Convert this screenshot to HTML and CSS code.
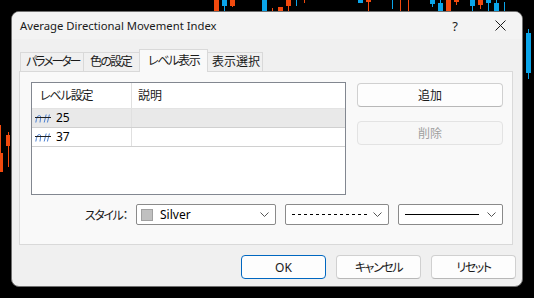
FILE: index.html
```html
<!DOCTYPE html>
<html lang="ja">
<head>
<meta charset="utf-8">
<title>Average Directional Movement Index</title>
<link rel="stylesheet" href="styles.css">
</head>
<body>
<svg class="chart" width="534" height="298" viewBox="0 0 534 298">
  <g class="up">
    <rect x="222" y="0" width="5" height="6"/><rect x="224" y="0" width="1" height="11"/>
    <rect x="262" y="0" width="5" height="11"/>
    <rect x="296" y="0" width="1" height="6"/>
    <rect x="358" y="0" width="5" height="3"/>
    <rect x="392" y="0" width="1" height="9"/>
    <rect x="430" y="0" width="5" height="4"/><rect x="432" y="0" width="1" height="7"/>
    <rect x="438" y="3" width="5" height="8"/><rect x="440" y="0" width="1" height="11"/>
    <rect x="470" y="0" width="5" height="6"/><rect x="472" y="0" width="1" height="11"/>
    <rect x="486" y="0" width="5" height="3"/><rect x="488" y="0" width="1" height="11"/>
    <rect x="494" y="3" width="5" height="8"/><rect x="496" y="0" width="1" height="11"/>
    <rect x="504" y="2" width="1" height="9"/>
    <rect x="526" y="33" width="5" height="40"/><rect x="528" y="29" width="1" height="50"/>
  </g>
  <g class="down">
    <rect x="214" y="0" width="5" height="11"/>
    <rect x="230" y="0" width="5" height="6"/><rect x="232" y="0" width="1" height="7"/>
    <rect x="272" y="8" width="1" height="3"/>
    <rect x="278" y="7" width="5" height="4"/>
    <rect x="286" y="0" width="5" height="6"/><rect x="288" y="0" width="1" height="11"/>
    <rect x="304" y="0" width="1" height="3"/>
    <rect x="366" y="0" width="5" height="2"/><rect x="368" y="0" width="1" height="11"/>
    <rect x="400" y="0" width="1" height="11"/>
    <rect x="408" y="0" width="1" height="11"/>
    <rect x="446" y="0" width="5" height="11"/>
    <rect x="454" y="0" width="5" height="2"/><rect x="456" y="0" width="1" height="5"/>
    <rect x="478" y="0" width="5" height="5"/><rect x="480" y="0" width="1" height="9"/>
    <rect x="0" y="125" width="1" height="47"/><rect x="0" y="153" width="3" height="19"/>
    <rect x="6" y="135" width="4" height="11"/><rect x="8" y="132" width="1" height="35"/>
  </g>
</svg>

<div class="dialog">
  <div class="titlebar">
    <span class="title">Average Directional Movement Index</span>
    <span class="cap help">?</span>
    <span class="cap close">
      <svg width="11" height="11" viewBox="0 0 11 11"><path d="M0.5 0.5 L10.5 10.5 M10.5 0.5 L0.5 10.5" stroke="#1a1a1a" stroke-width="1" fill="none"/></svg>
    </span>
  </div>

  <div class="tabs">
    <div class="tab t1">パラメーター</div>
    <div class="tab t2">色の設定</div>
    <div class="tab t3 active">レベル表示</div>
    <div class="tab t4">表示選択</div>
  </div>

  <div class="panel">
    <div class="top">
      <div class="list">
        <div class="lrow head">
          <div class="c1 kana">レベル設定</div>
          <div class="c2">説明</div>
        </div>
        <div class="lrow sel">
          <div class="c1">
            <svg class="lvl" width="16" height="9" viewBox="0 0 16 9"><path d="M0.8 8.5 Q1.8 1.5 4.3 1.5 Q6 1.5 5.6 4 L5 8.5 M9.2 8.5 L11.2 0.5 M12.4 8.5 L14.4 0.5" stroke="#4a7fd0" stroke-width="1" fill="none"/><path d="M0 3.5 H16" stroke="#222" stroke-width="1"/></svg>
            <span>25</span>
          </div>
          <div class="c2"></div>
        </div>
        <div class="lrow">
          <div class="c1">
            <svg class="lvl" width="16" height="9" viewBox="0 0 16 9"><path d="M0.8 8.5 Q1.8 1.5 4.3 1.5 Q6 1.5 5.6 4 L5 8.5 M9.2 8.5 L11.2 0.5 M12.4 8.5 L14.4 0.5" stroke="#4a7fd0" stroke-width="1" fill="none"/><path d="M0 3.5 H16" stroke="#222" stroke-width="1"/></svg>
            <span>37</span>
          </div>
          <div class="c2"></div>
        </div>
      </div>
      <div class="side">
        <button class="btn">追加</button>
        <button class="btn disabled">削除</button>
      </div>
    </div>

    <div class="style-row">
      <span class="label kana">スタイル：</span>
      <div class="combo c-color">
        <span class="swatch"></span><span class="ctext">Silver</span>
        <svg class="chev" width="9" height="5" viewBox="0 0 9 5"><path d="M0.5 0.5 L4.5 4.5 L8.5 0.5" stroke="#555" fill="none"/></svg>
      </div>
      <div class="combo c-dash">
        <span class="dash"></span>
        <svg class="chev" width="9" height="5" viewBox="0 0 9 5"><path d="M0.5 0.5 L4.5 4.5 L8.5 0.5" stroke="#555" fill="none"/></svg>
      </div>
      <div class="combo c-solid">
        <span class="solid"></span>
        <svg class="chev" width="9" height="5" viewBox="0 0 9 5"><path d="M0.5 0.5 L4.5 4.5 L8.5 0.5" stroke="#555" fill="none"/></svg>
      </div>
    </div>
  </div>

  <div class="footer">
    <button class="btn primary">OK</button>
    <button class="btn kana">キャンセル</button>
    <button class="btn kana">リセット</button>
  </div>
</div>
</body>
</html>
```

FILE: styles.css
```css
* { box-sizing: border-box; }

html, body {
  margin: 0;
}

body {
  width: 534px;
  height: 298px;
  padding: 11px 0 0 11px;
  background: #000;
  position: relative;
  overflow: hidden;
  font-family: "Noto Sans", "Noto Sans CJK JP", sans-serif;
  font-size: 12px;
  color: #000;
  font-feature-settings: "palt";
}

.kana { letter-spacing: -1.4px; }

.chart {
  position: absolute;
  left: 0;
  top: 0;
}
.chart .up { fill: #0aa5ea; }
.chart .down { fill: #f24a0e; }

.dialog {
  position: relative;
  z-index: 1;
  width: 512px;
  height: 276px;
  border: 1px solid #707070;
  border-radius: 8px;
  background: #f0f0f0;
  display: flex;
  flex-direction: column;
  overflow: hidden;
}

.titlebar {
  height: 27px;
  display: flex;
  align-items: center;
  background: #f3f3f3;
}
.title {
  padding-left: 8px;
  font-size: 11.3px;
  color: #1a1a1a;
  flex: 1;
  line-height: 16px;
}
.cap {
  height: 27px;
  display: flex;
  align-items: center;
  justify-content: center;
}
.help {
  width: 46px;
  font-size: 13px;
  color: #1a1a1a;
}
.close {
  width: 44px;
}

.tabs {
  margin: 10px 9px 0 8px;
  height: 22px;
  display: flex;
  align-items: flex-end;
}
.tab {
  height: 19px;
  border: 1px solid #d9d9d9;
  border-bottom: none;
  margin-right: -1px;
  background: #f0f0f0;
  line-height: 18px;
  color: #1a1a1a;
  white-space: nowrap;
  overflow: hidden;
}
.t1 { width: 64px; padding-left: 5px; letter-spacing: -2.1px; }
.t2 { width: 57px; padding-left: 6px; letter-spacing: -1.6px; }
.t3 { width: 69px; padding-left: 8px; letter-spacing: -1.3px; }
.t4 { width: 56px; padding-left: 4px; }
.tab.active {
  position: relative;
  z-index: 2;
  height: 23px;
  margin-bottom: -1px;
  background: #f9f9f9;
  line-height: 21px;
}

.panel {
  position: relative;
  height: 174px;
  margin: 0 9px 0 7px;
  border: 1px solid #d9d9d9;
  background: #f9f9f9;
  padding: 10px 9px 0 11px;
  display: flex;
  flex-direction: column;
}

.top {
  display: flex;
  gap: 11px;
}

.list {
  width: 315px;
  height: 113px;
  border: 1px solid #828790;
  background: #fff;
}
.lrow {
  display: flex;
  height: 19px;
  border-bottom: 1px solid #d0d0d0;
  line-height: 18px;
}
.lrow.head {
  height: 26px;
  border-bottom: 1px solid #e3e3e3;
  line-height: 25px;
  color: #1a1a1a;
}
.lrow.sel { background: #e9e9e9; }
.c1 {
  width: 100px;
  border-right: 1px solid #e0e0e0;
  display: flex;
  align-items: center;
  padding-left: 3px;
  gap: 5px;
}
.head .c1 { padding-left: 8px; letter-spacing: -1.1px; }
.c2 {
  flex: 1;
  padding-left: 6px;
}
.lvl { flex: none; }

.side {
  width: 146px;
  display: flex;
  flex-direction: column;
  gap: 14px;
  padding-top: 1px;
}

.btn {
  height: 24px;
  border: 1px solid #d0d0d0;
  border-bottom-color: #b8b8b8;
  border-radius: 4px;
  background: #fdfdfd;
  font-family: inherit;
  font-size: 12px;
  color: #1a1a1a;
  padding: 0;
  font-feature-settings: "palt";
}
.btn.disabled {
  background: #f7f7f7;
  border-color: #e3e3e3;
  color: #a0a0a0;
}
.btn.primary {
  border-color: #0067c0;
}

.style-row {
  margin-top: 9px;
  display: flex;
  justify-content: flex-end;
  align-items: center;
  gap: 9px;
}
.label {
  color: #1a1a1a;
}
.combo {
  height: 21px;
  border: 1px solid #8a8a8a;
  border-radius: 2px;
  background: #fff;
  display: flex;
  align-items: center;
  padding-left: 4px;
  padding-right: 6px;
}
.c-color { width: 140px; }
.c-dash { width: 104px; padding-left: 6px; }
.c-solid { width: 105px; padding-left: 6px; }
.swatch {
  width: 12px;
  height: 12px;
  background: #c0c0c0;
  border: 1px solid #a0a0a0;
  margin-right: 7px;
}
.ctext { flex: 1; }
.dash {
  width: 75px;
  height: 1px;
  background: repeating-linear-gradient(90deg, #000 0 3px, transparent 3px 6px);
  margin-right: auto;
}
.solid {
  width: 74px;
  height: 1px;
  background: #000;
  margin-right: auto;
}
.chev { flex: none; }

.footer {
  margin-top: 10px;
  padding-right: 6px;
  display: flex;
  justify-content: flex-end;
  gap: 10px;
}
.footer .btn { width: 85px; }
```
